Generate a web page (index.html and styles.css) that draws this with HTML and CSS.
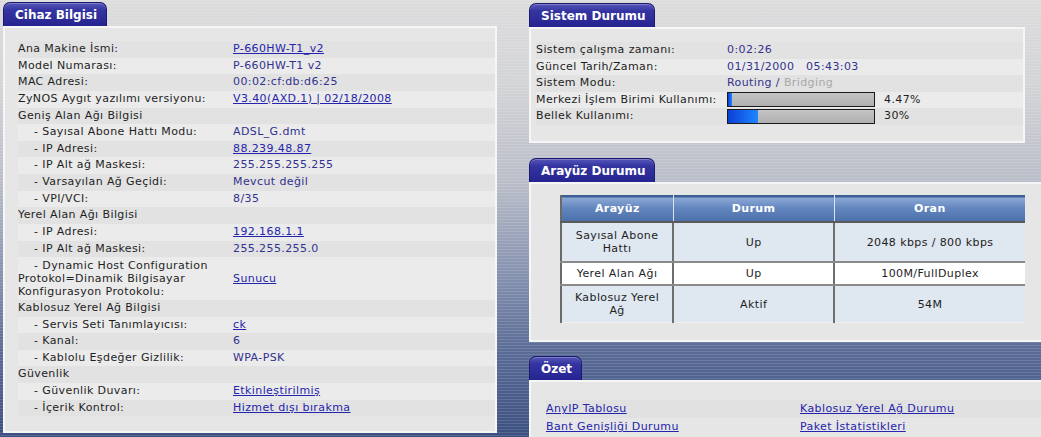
FILE: index.html
```html
<!DOCTYPE html>
<html lang="tr">
<head>
<meta charset="utf-8">
<title>Durum</title>
<link rel="stylesheet" href="styles.css">
</head>
<body>
<div class="page">
  <section class="col col-left">
    <div class="tab">Cihaz Bilgisi</div>
    <div class="box box-left">
      <div class="rows">
        <div class="row"><span class="lbl">Ana Makine İsmi:</span><span class="val"><a href="#">P-660HW-T1_v2</a></span></div>
        <div class="row"><span class="lbl">Model Numarası:</span><span class="val">P-660HW-T1 v2</span></div>
        <div class="row"><span class="lbl">MAC Adresi:</span><span class="val">00:02:cf:db:d6:25</span></div>
        <div class="row"><span class="lbl">ZyNOS Aygıt yazılımı versiyonu:</span><span class="val"><a href="#">V3.40(AXD.1) | 02/18/2008</a></span></div>
        <div class="row"><span class="lbl">Geniş Alan Ağı Bilgisi</span><span class="val"></span></div>
        <div class="row"><span class="lbl sub">- Sayısal Abone Hattı Modu:</span><span class="val">ADSL_G.dmt</span></div>
        <div class="row"><span class="lbl sub">- IP Adresi:</span><span class="val"><a href="#">88.239.48.87</a></span></div>
        <div class="row"><span class="lbl sub">- IP Alt ağ Maskesi:</span><span class="val">255.255.255.255</span></div>
        <div class="row"><span class="lbl sub">- Varsayılan Ağ Geçidi:</span><span class="val">Mevcut değil</span></div>
        <div class="row"><span class="lbl sub">- VPI/VCI:</span><span class="val">8/35</span></div>
        <div class="row"><span class="lbl">Yerel Alan Ağı Bilgisi</span><span class="val"></span></div>
        <div class="row"><span class="lbl sub">- IP Adresi:</span><span class="val"><a href="#">192.168.1.1</a></span></div>
        <div class="row"><span class="lbl sub">- IP Alt ağ Maskesi:</span><span class="val">255.255.255.0</span></div>
        <div class="row row-multi"><span class="lbl first-sub">- Dynamic Host Configuration<br>Protokol=Dinamik Bilgisayar<br>Konfigurasyon Protokolu:</span><span class="val"><a href="#">Sunucu</a></span></div>
        <div class="row"><span class="lbl">Kablosuz Yerel Ağ Bilgisi</span><span class="val"></span></div>
        <div class="row"><span class="lbl sub">- Servis Seti Tanımlayıcısı:</span><span class="val"><a href="#">ck</a></span></div>
        <div class="row"><span class="lbl sub">- Kanal:</span><span class="val">6</span></div>
        <div class="row"><span class="lbl sub">- Kablolu Eşdeğer Gizlilik:</span><span class="val">WPA-PSK</span></div>
        <div class="row"><span class="lbl">Güvenlik</span><span class="val"></span></div>
        <div class="row"><span class="lbl sub">- Güvenlik Duvarı:</span><span class="val"><a href="#">Etkinleştirilmiş</a></span></div>
        <div class="row"><span class="lbl sub">- İçerik Kontrol:</span><span class="val"><a href="#">Hizmet dışı bırakma</a></span></div>
      </div>
    </div>
  </section>

  <section class="col col-right">
    <div class="tab">Sistem Durumu</div>
    <div class="box box-system">
      <div class="rows">
        <div class="row row-r"><span class="lbl">Sistem çalışma zamanı:</span><span class="val">0:02:26</span></div>
        <div class="row row-r"><span class="lbl">Güncel Tarih/Zaman:</span><span class="val">01/31/2000&nbsp;&nbsp;&nbsp;05:43:03</span></div>
        <div class="row row-r"><span class="lbl">Sistem Modu:</span><span class="val">Routing / <span class="dim">Bridging</span></span></div>
        <div class="row row-r"><span class="lbl">Merkezi İşlem Birimi Kullanımı:</span><span class="val meter-cell"><span class="meter"><span class="fill" style="width:4px"></span></span><span class="pct">4.47%</span></span></div>
        <div class="row row-r"><span class="lbl">Bellek Kullanımı:</span><span class="val meter-cell"><span class="meter"><span class="fill" style="width:30px"></span></span><span class="pct">30%</span></span></div>
      </div>
    </div>

    <div class="tab tab-gap">Arayüz Durumu</div>
    <div class="box box-wide box-iface">
      <table class="iface">
        <thead>
          <tr><th class="c1">Arayüz</th><th class="c2">Durum</th><th class="c3">Oran</th></tr>
        </thead>
        <tbody>
          <tr class="r-blue r-tall"><td>Sayısal Abone Hattı</td><td>Up</td><td>2048 kbps / 800 kbps</td></tr>
          <tr class="r-white"><td>Yerel Alan Ağı</td><td>Up</td><td>100M/FullDuplex</td></tr>
          <tr class="r-blue r-tall2"><td>Kablosuz Yerel Ağ</td><td>Aktif</td><td>54M</td></tr>
        </tbody>
      </table>
    </div>

    <div class="tab tab-gap2">Özet</div>
    <div class="box box-wide box-summary">
      <div class="links">
        <a href="#">AnyIP Tablosu</a>
        <a href="#">Kablosuz Yerel Ağ Durumu</a>
        <a href="#">Bant Genişliği Durumu</a>
        <a href="#">Paket İstatistikleri</a>
      </div>
    </div>
  </section>
</div>
</body>
</html>
```

FILE: styles.css
```css
html, body {
  margin: 0;
  padding: 0;
  height: 100%;
  overflow: hidden;
}

body {
  font-family: "DejaVu Sans", Verdana, sans-serif;
  font-size: 11px;
  letter-spacing: 0.4px;
  color: #1e1e1e;
  background:
    repeating-linear-gradient(to bottom, rgba(255,255,255,0.13) 0, rgba(255,255,255,0.13) 1px, rgba(0,0,0,0) 1px, rgba(0,0,0,0) 3px),
    linear-gradient(to bottom, #dcdcdd 0, #d2d3d6 20%, #b9bdc8 42%, #8793b0 62%, #5b6c96 80%, #3b4f80 100%);
}

.page {
  display: flex;
  align-items: flex-start;
  gap: 32px;
  padding: 2px 0 0 3px;
}

.col {
  display: flex;
  flex-direction: column;
  align-items: flex-start;
  flex-shrink: 0;
}

.col-left { width: 494px; }
.col-right { width: 540px; margin-top: 1px; }

.tab {
  height: 23px;
  line-height: 24px;
  padding: 0 9px 0 11px;
  color: #fff;
  font-weight: bold;
  font-size: 12px;
  letter-spacing: 0;
  background: linear-gradient(to bottom, #5656b8 0, #3535a2 30%, #25238f 100%);
  border: 1px solid #1b1a6e;
  border-bottom: 0;
  border-radius: 7px 7px 0 0;
  box-shadow: inset 0 1px 0 rgba(255,255,255,0.25);
}

.tab-gap { margin-top: 15px; }
.tab-gap2 { margin-top: 14px; }

.box {
  box-sizing: border-box;
  background: #e6e6e6;
  border: 2px solid #f6f6f6;
  align-self: stretch;
}

.box-left {
  height: 407px;
  padding: 13px 0 0 13px;
}

.box-system {
  width: 496px;
  align-self: flex-start;
  height: 116px;
  padding: 13px 0 0 5px;
}

.box-wide {
  width: 540px;
}

.rows {
  display: flex;
  flex-direction: column;
}

.row {
  display: grid;
  grid-template-columns: 215px 1fr;
  line-height: 16.65px;
  height: 16.65px;
}

.row:nth-child(even) { background: rgba(255,255,255,0.22); }
.row:nth-child(odd) { background: rgba(0,0,0,0.015); }

.row-r {
  grid-template-columns: 191px 1fr;
  line-height: 16.5px;
  height: 16.5px;
}

.row-multi {
  height: auto;
  line-height: 13px;
  padding: 1.8px 0;
  align-items: center;
}

.lbl { color: #1e1e1e; white-space: nowrap; }
.lbl.sub { padding-left: 16px; }
.lbl.first-sub { text-indent: 16px; }

.val { color: #32328e; white-space: nowrap; }

a { color: #2424ac; text-decoration: underline; }

.dim { color: #a8a8a8; }

.meter-cell {
  display: flex;
  align-items: center;
}

.meter {
  box-sizing: border-box;
  width: 148px;
  height: 15px;
  border: 1px solid #1a1a1a;
  background: linear-gradient(to bottom, #c4c4c4, #b0b0b0);
  display: flex;
  align-items: stretch;
}

.fill {
  display: block;
  background: linear-gradient(to right, #0a3fd6, #1f86ff);
}

.pct {
  margin-left: 9px;
  color: #1e1e1e;
}

.box-iface {
  height: 160px;
  padding: 11px 0 0 29px;
}

.iface {
  border-collapse: collapse;
  width: 465px;
  font-size: 11px;
  text-align: center;
  border-left: 2px solid #6a6a6a;
}

.iface th {
  height: 26px;
  padding: 0;
  color: #fff;
  font-weight: bold;
  background: linear-gradient(to bottom, #3e5f95 0, #3e5f95 2px, #8aa8d4 3px, #6486bf 50%, #4b70aa 100%);
  border-right: 1px solid #dce4ef;
  border-bottom: 2px solid #5a5a5a;
}

.iface .c1 { width: 111px; }
.iface .c2 { width: 161px; }
.iface .c3 { width: 191px; }

.iface td {
  padding: 0 7px;
  line-height: 13px;
  color: #1e1e1e;
  border-right: 2px solid #6e6e6e;
  border-bottom: 2px solid #8a8a8a;
}

.iface td:last-child, .iface th:last-child { border-right: 0; }
.iface tr:last-child td { border-bottom: 1px solid #f0f0f0; }

.r-blue td { background: #dfe7f0; }
.r-white td { background: #ffffff; }
.r-tall td { height: 38px; }
.r-white td { height: 21px; }
.r-tall2 td { height: 36px; }

.box-summary {
  height: 70px;
  padding: 18px 0 0 15px;
}

.links {
  display: grid;
  grid-template-columns: 254px 1fr;
  grid-auto-rows: 18px;
  line-height: 18px;
}

.links a:nth-child(-n+2) { background: rgba(0,0,0,0.02); }
```
